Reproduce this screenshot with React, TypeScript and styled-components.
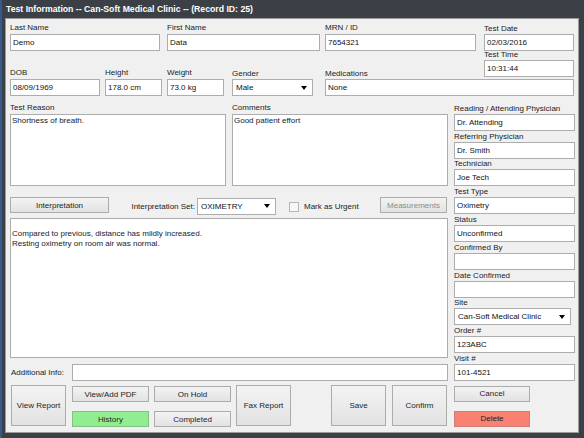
import styled, { createGlobalStyle } from "styled-components";

const GlobalStyle = createGlobalStyle`
	html, body {
		margin: 0;
		padding: 0;
		background: #3b4047;
	}
	body {
		font-family: "Liberation Sans", Arial, sans-serif;
		font-size: 8px;
		color: #1a1a1a;
	}
`;

const Window = styled.div`
	width: 584px;
	height: 438px;
	box-sizing: border-box;
	background: #3b4047;
	border-left: 2px solid #35598a;
	padding: 0 5px 5px 3px;
	display: flex;
	flex-direction: column;
`;

const TitleBar = styled.div`
	height: 18px;
	display: flex;
	align-items: center;
	padding-left: 1px;
	color: #ffffff;
	font-weight: bold;
	font-size: 8.7px;
	white-space: nowrap;
`;

const Client = styled.div`
	flex: 1;
	background: #f0f0f0;
	border: 1px solid #9b9b9b;
	padding: 0 3px 0 4px;
	display: flex;
	flex-direction: column;
`;

const TopGrid = styled.div`
	display: grid;
	grid-template-columns: 157px 158px 159px 90px;
	grid-template-rows: 15px 17px 9px 8px 11px 17px;
`;

const Field = styled.div<{ $w?: number; $col?: string; $row?: string; $start?: boolean; $ml?: number }>`
	display: flex;
	flex-direction: column;
	justify-content: ${p => (p.$start ? "flex-start" : "flex-end")};
	width: ${p => (p.$w ? `${p.$w}px` : "auto")};
	grid-column: ${p => p.$col || "auto"};
	grid-row: ${p => p.$row || "auto"};
	margin-left: ${p => p.$ml || 0}px;
	flex-shrink: 0;
`;

const Label = styled.div<{ $h?: number; $mb?: number }>`
	height: ${p => p.$h ?? 10}px;
	line-height: 10px;
	margin-bottom: ${p => p.$mb ?? 1}px;
	white-space: nowrap;
	color: #1c1c1c;
	display: flex;
	align-items: flex-end;
`;

const TextBox = styled.div<{ $h?: number }>`
	height: ${p => p.$h ?? 17}px;
	box-sizing: border-box;
	background: #ffffff;
	border: 1px solid #adadad;
	padding: 0 2px;
	line-height: 15px;
	color: #111111;
	white-space: nowrap;
	overflow: hidden;
`;

const MemoBox = styled.div<{ $h: number; $pt?: number }>`
	height: ${p => p.$h}px;
	box-sizing: border-box;
	background: #ffffff;
	border: 1px solid #adadad;
	padding: ${p => p.$pt ?? 1}px 1px 0 1px;
	line-height: 10px;
	color: #121a30;
`;

const Combo = styled.div<{ $w?: number }>`
	height: 17px;
	width: ${p => (p.$w ? `${p.$w}px` : "auto")};
	box-sizing: border-box;
	background: #ffffff;
	border: 1px solid #adadad;
	padding: 0 5px 0 3px;
	display: flex;
	align-items: center;
	justify-content: space-between;
	color: #111111;
	white-space: nowrap;
	flex-shrink: 0;
`;

const Arrow = styled.span`
	width: 0;
	height: 0;
	border-left: 3px solid transparent;
	border-right: 3px solid transparent;
	border-top: 4px solid #000000;
`;

const Row2 = styled.div`
	grid-column: 1 / 3;
	grid-row: 5 / 7;
	display: flex;
	align-items: flex-end;
	gap: 5px;
`;

const Middle = styled.div`
	display: flex;
	gap: 6px;
	margin-top: 7px;
`;

const LeftCol = styled.div`
	width: 438px;
	display: flex;
	flex-direction: column;
`;

const RightCol = styled.div`
	width: 121px;
	display: flex;
	flex-direction: column;
`;

const ReasonRow = styled.div`
	display: flex;
	gap: 6px;
`;

const InterpRow = styled.div`
	display: flex;
	align-items: center;
	height: 18px;
	margin-top: 11px;
`;

const Button = styled.button<{ $w: number; $h?: number; $tone?: "green" | "red" | "disabled" }>`
	width: ${p => p.$w}px;
	height: ${p => p.$h ?? 16}px;
	box-sizing: border-box;
	padding: 0;
	font-family: "Liberation Sans", Arial, sans-serif;
	font-size: 8px;
	flex-shrink: 0;
	color: ${p => (p.$tone === "disabled" ? "#8c8c8c" : "#1e1e1e")};
	border: 1px solid ${p => (p.$tone === "green" ? "#86c086" : p.$tone === "red" ? "#c88078" : "#acacac")};
	background: ${p =>
		p.$tone === "green"
			? "#90ee90"
			: p.$tone === "red"
			? "#fa8072"
			: "linear-gradient(#f3f3f3, #e2e2e2)"};
	align-self: flex-start;
`;

const SetLabel = styled.div`
	width: 86px;
	text-align: right;
	white-space: nowrap;
	margin-right: 2px;
	margin-top: 1px;
`;

const CheckGroup = styled.div`
	display: flex;
	align-items: center;
	margin-left: 13px;
	color: #222222;
	white-space: nowrap;
`;

const CheckBox = styled.span`
	width: 10px;
	height: 10px;
	box-sizing: border-box;
	border: 1px solid #b5b5b5;
	background: #f6f6f6;
	margin-right: 5px;
	margin-top: 1px;
`;

const PushRight = styled.div`
	margin-left: auto;
	margin-right: 1px;
	align-self: flex-start;
`;

const AddRow = styled.div`
	display: flex;
	align-items: center;
	margin-top: 6px;
`;

const AddLabel = styled.div`
	width: 61px;
	padding-left: 1px;
	white-space: nowrap;
`;

const ButtonRow = styled.div`
	display: flex;
	margin-top: 4px;
	height: 42px;
`;

const Stack = styled.div<{ $ml: number }>`
	display: flex;
	flex-direction: column;
	gap: 9px;
	margin-left: ${p => p.$ml}px;
	padding-top: 1px;
`;

const Gap = styled.div<{ $w: number | "auto" }>`
	width: ${p => (p.$w === "auto" ? "auto" : `${p.$w}px`)};
	flex: ${p => (p.$w === "auto" ? 1 : "none")};
`;

const RightButtons = styled.div`
	display: flex;
	flex-direction: column;
	align-items: flex-end;
	gap: 9px;
	margin-top: 5px;
	margin-right: 4px;
`;

const rightFields: [string, string][] = [
	["Reading / Attending Physician", "Dr. Attending"],
	["Referring Physician", "Dr. Smith"],
	["Technician", "Joe Tech"],
	["Test Type", "Oximetry"],
	["Status", "Unconfirmed"],
	["Confirmed By", ""],
	["Date Confirmed", ""],
	["Site", "SITE"],
	["Order #", "123ABC"],
	["Visit #", "101-4521"],
];

const App = () => {
	return (
		<>
			<GlobalStyle />
			<Window>
				<TitleBar>Test Information -- Can-Soft Medical Clinic -- (Record ID: 25)</TitleBar>
				<Client>
					<TopGrid>
						<Field $w={150} $col="1" $row="1 / 3">
							<Label>Last Name</Label>
							<TextBox>Demo</TextBox>
						</Field>
						<Field $w={153} $col="2" $row="1 / 3">
							<Label>First Name</Label>
							<TextBox>Data</TextBox>
						</Field>
						<Field $w={151} $col="3" $row="1 / 3">
							<Label>MRN / ID</Label>
							<TextBox>7654321</TextBox>
						</Field>
						<Field $w={90} $col="4" $row="1 / 3">
							<Label $mb={0}>Test Date</Label>
							<TextBox>02/03/2016</TextBox>
						</Field>
						<Field $w={90} $col="4" $row="3 / 6" $start>
							<Label $h={9} $mb={0}>Test Time</Label>
							<TextBox>10:31:44</TextBox>
						</Field>
						<Row2>
							<Field $w={90}>
								<Label>DOB</Label>
								<TextBox>08/09/1969</TextBox>
							</Field>
							<Field $w={57}>
								<Label>Height</Label>
								<TextBox>178.0 cm</TextBox>
							</Field>
							<Field $w={57}>
								<Label>Weight</Label>
								<TextBox>73.0 kg</TextBox>
							</Field>
							<Field $w={81} $ml={3}>
								<Label $mb={0}>Gender</Label>
								<Combo>
									<span>Male</span>
									<Arrow />
								</Combo>
							</Field>
						</Row2>
						<Field $col="3 / 5" $row="5 / 7">
							<Label $mb={0}>Medications</Label>
							<TextBox>None</TextBox>
						</Field>
					</TopGrid>

					<Middle>
						<LeftCol>
							<ReasonRow>
								<Field $w={216}>
									<Label>Test Reason</Label>
									<MemoBox $h={72}>Shortness of breath.</MemoBox>
								</Field>
								<Field $w={216}>
									<Label>Comments</Label>
									<MemoBox $h={72}>Good patient effort</MemoBox>
								</Field>
							</ReasonRow>

							<InterpRow>
								<Button $w={99}>Interpretation</Button>
								<SetLabel>Interpretation Set:</SetLabel>
								<Combo $w={79}>
									<span>OXIMETRY</span>
									<Arrow />
								</Combo>
								<CheckGroup>
									<CheckBox />
									Mark as Urgent
								</CheckGroup>
								<PushRight>
									<Button $w={67} $tone="disabled">Measurements</Button>
								</PushRight>
							</InterpRow>

							<MemoBox $h={140} $pt={10} style={{ marginTop: 3 }}>
								Compared to previous, distance has mildly increased.
								<br />
								Resting oximetry on room air was normal.
							</MemoBox>

							<AddRow>
								<AddLabel>Additional Info:</AddLabel>
								<TextBox style={{ flex: 1 }} />
							</AddRow>

							<ButtonRow>
								<Gap $w={1} />
								<Button $w={55} $h={41}>View Report</Button>
								<Stack $ml={6}>
									<Button $w={77}>View/Add PDF</Button>
									<Button $w={77} $tone="green">History</Button>
								</Stack>
								<Stack $ml={5}>
									<Button $w={77}>On Hold</Button>
									<Button $w={77}>Completed</Button>
								</Stack>
								<Gap $w={5} />
								<Button $w={55} $h={41}>Fax Report</Button>
								<Gap $w="auto" />
								<Button $w={55} $h={41}>Save</Button>
								<Gap $w={6} />
								<Button $w={55} $h={41}>Confirm</Button>
								<Gap $w={1} />
							</ButtonRow>
						</LeftCol>

						<RightCol>
							{rightFields.map(([label, value]) => (
								<Field key={label}>
									<Label $h={10.8} $mb={0}>{label}</Label>
									{value === "SITE" ? (
										<Combo $w={117}>
											<span>Can-Soft Medical Clinic</span>
											<Arrow />
										</Combo>
									) : (
										<TextBox>{value}</TextBox>
									)}
								</Field>
							))}
							<RightButtons>
								<Button $w={76}>Cancel</Button>
								<Button $w={76} $tone="red">Delete</Button>
							</RightButtons>
						</RightCol>
					</Middle>
				</Client>
			</Window>
		</>
	);
};

export default App;
